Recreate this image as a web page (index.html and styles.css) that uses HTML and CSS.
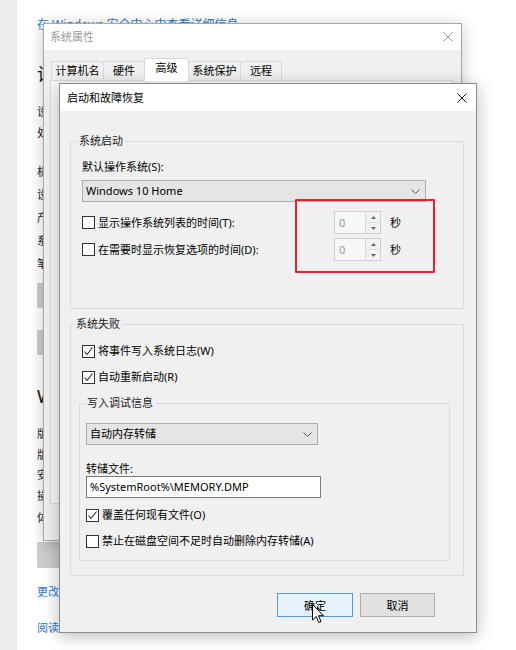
FILE: index.html
```html
<!DOCTYPE html>
<html lang="zh-CN">
<head>
<meta charset="utf-8">
<title>启动和故障恢复</title>
<link rel="stylesheet" href="styles.css">
</head>
<body>
<div class="desktop">
  <aside class="strip"></aside>
  <main class="page">
    <a class="link">在 Windows 安全中心中查看详细信息</a>
    <h1 class="heading first-heading">设备规格</h1>
    <div class="line gap19">设备名称</div>
    <div class="line gap7">处理器</div>
    <div class="line gap25">机带 RAM</div>
    <div class="line gap9">设备 ID</div>
    <div class="line gap9">产品 ID</div>
    <div class="line gap9">系统类型</div>
    <div class="line gap9">笔和触控</div>
    <div class="page-btn gap12">复制</div>
    <div class="page-btn gap22">重命名这台电脑</div>
    <h2 class="heading second-heading">Windows 规格</h2>
    <div class="line gap19">版本</div>
    <div class="line gap7">版本号</div>
    <div class="line gap6">安装日期</div>
    <div class="line gap7">操作系统内部版本</div>
    <div class="line gap8">体验</div>
    <div class="page-btn tall gap17">复制</div>
    <a class="link small gap17">更改产品密钥或升级 Windows</a>
    <a class="link small gap22">阅读适用于我们服务的 Microsoft 服务协议</a>
  </main>

  <section class="win sysprops">
    <header class="titlebar sp-titlebar">
      <span class="title inactive">系统属性</span>
      <span class="close sp-close">
        <svg width="10" height="10" viewBox="0 0 10 10"><path d="M0.5 0.5 L9.5 9.5 M9.5 0.5 L0.5 9.5" stroke="#9a9a9a" stroke-width="1"/></svg>
      </span>
    </header>
    <div class="sp-body">
      <nav class="tabs">
        <span class="tab">计算机名</span>
        <span class="tab">硬件</span>
        <span class="tab active">高级</span>
        <span class="tab">系统保护</span>
        <span class="tab">远程</span>
      </nav>
      <div class="tabpanel"></div>
    </div>
  </section>

  <section class="win startup">
    <header class="titlebar st-titlebar">
      <span class="title">启动和故障恢复</span>
      <span class="close st-close">
        <svg width="10" height="10" viewBox="0 0 10 10"><path d="M0.5 0.5 L9.5 9.5 M9.5 0.5 L0.5 9.5" stroke="#111" stroke-width="1"/></svg>
      </span>
    </header>
    <div class="dlg-body">
      <fieldset class="group boot">
        <legend class="legend boot-legend">系统启动</legend>
        <div class="label">默认操作系统(S):</div>
        <div class="select os-select">
          <span>Windows 10 Home</span>
          <svg class="chev" width="9" height="5" viewBox="0 0 9 5"><path d="M0.5 0.5 L4.5 4.5 L8.5 0.5" fill="none" stroke="#555" stroke-width="1"/></svg>
        </div>
        <div class="timer-row row-first">
          <label class="check timer-check">
            <span class="box"></span>
            <span>显示操作系统列表的时间(T):</span>
          </label>
          <div class="spin">
            <span class="spin-val">0</span>
            <span class="spin-btns">
              <span class="spin-btn"><svg width="5" height="3" viewBox="0 0 5 3"><path d="M0 3 L2.5 0 L5 3 Z" fill="#666"/></svg></span>
              <span class="spin-btn"><svg width="5" height="3" viewBox="0 0 5 3"><path d="M0 0 L2.5 3 L5 0 Z" fill="#666"/></svg></span>
            </span>
          </div>
          <span class="unit">秒</span>
        </div>
        <div class="timer-row row-second">
          <label class="check timer-check">
            <span class="box"></span>
            <span>在需要时显示恢复选项的时间(D):</span>
          </label>
          <div class="spin">
            <span class="spin-val">0</span>
            <span class="spin-btns">
              <span class="spin-btn"><svg width="5" height="3" viewBox="0 0 5 3"><path d="M0 3 L2.5 0 L5 3 Z" fill="#666"/></svg></span>
              <span class="spin-btn"><svg width="5" height="3" viewBox="0 0 5 3"><path d="M0 0 L2.5 3 L5 0 Z" fill="#666"/></svg></span>
            </span>
          </div>
          <span class="unit">秒</span>
        </div>
      </fieldset>

      <fieldset class="group fail">
        <legend class="legend boot-legend">系统失败</legend>
        <label class="check check-row indent">
          <span class="box"><svg width="11" height="11" viewBox="0 0 11 11"><path d="M1.5 5.5 L4 8.5 L9.5 1.5" fill="none" stroke="#222" stroke-width="1.1"/></svg></span>
          <span>将事件写入系统日志(W)</span>
        </label>
        <label class="check check-row indent row-gap">
          <span class="box"><svg width="11" height="11" viewBox="0 0 11 11"><path d="M1.5 5.5 L4 8.5 L9.5 1.5" fill="none" stroke="#222" stroke-width="1.1"/></svg></span>
          <span>自动重新启动(R)</span>
        </label>
        <fieldset class="group debug">
          <legend class="legend debug-legend">写入调试信息</legend>
          <div class="select dump-select">
            <span>自动内存转储</span>
            <svg class="chev" width="9" height="5" viewBox="0 0 9 5"><path d="M0.5 0.5 L4.5 4.5 L8.5 0.5" fill="none" stroke="#555" stroke-width="1"/></svg>
          </div>
          <div class="label dump-label">转储文件:</div>
          <div class="textbox">%SystemRoot%\MEMORY.DMP</div>
          <label class="check check-row overwrite">
            <span class="box"><svg width="11" height="11" viewBox="0 0 11 11"><path d="M1.5 5.5 L4 8.5 L9.5 1.5" fill="none" stroke="#222" stroke-width="1.1"/></svg></span>
            <span>覆盖任何现有文件(O)</span>
          </label>
          <label class="check check-row row-gap">
            <span class="box"></span>
            <span>禁止在磁盘空间不足时自动删除内存转储(A)</span>
          </label>
        </fieldset>
      </fieldset>

      <div class="buttons">
        <button class="btn primary">确定</button>
        <button class="btn cancel">取消</button>
      </div>
    </div>
    <div class="highlight"></div>
  </section>

  <svg class="cursor" width="13" height="20" viewBox="0 0 13 20">
    <path d="M0.5 0.5 L0.5 16 L4.2 12.5 L6.8 18.6 L9 17.6 L6.5 11.7 L11.5 11.7 Z" fill="#fff" stroke="#000" stroke-width="1" stroke-linejoin="round"/>
  </svg>
</div>
</body>
</html>
```

FILE: styles.css
```css
* { box-sizing: border-box; }

html, body {
  margin: 0;
  padding: 0;
}

body {
  width: 516px;
  height: 650px;
  overflow: hidden;
  background: #fff;
  font-family: "Noto Sans", "Noto Sans CJK SC", sans-serif;
  font-size: 11px;
  color: #000;
}

.desktop {
  position: relative;
  width: 516px;
  height: 650px;
  display: flex;
}

.strip {
  flex: none;
  width: 17px;
  background: #ececec;
}

/* background settings page */
.page {
  flex: 1;
  padding: 17px 0 0 20px;
  display: flex;
  flex-direction: column;
  align-items: flex-start;
  line-height: 14px;
  color: #222;
  white-space: nowrap;
}

.link {
  color: #2a78cf;
  font-size: 12px;
  line-height: 16px;
}
.link.small { font-size: 11px; line-height: 14px; }

.heading {
  margin: 0;
  font-weight: normal;
  font-size: 18px;
  line-height: 24px;
  color: #111;
}
.first-heading { margin-top: 29px; }
.second-heading { margin-top: 29px; }

.page-btn {
  width: 110px;
  height: 25px;
  background: #cccccc;
  color: #000;
  padding: 5px 8px 5px 30px;
}
.page-btn.tall { height: 26px; }

.gap6 { margin-top: 6px; }
.gap7 { margin-top: 7px; }
.gap8 { margin-top: 8px; }
.gap9 { margin-top: 9px; }
.gap12 { margin-top: 12px; }
.gap17 { margin-top: 17px; }
.gap19 { margin-top: 19px; }
.gap22 { margin-top: 22px; }
.gap25 { margin-top: 25px; }

/* windows */
.win {
  position: absolute;
  display: flex;
  flex-direction: column;
  background: #f0f0f0;
  border: 1px solid #a8a8a8;
  box-shadow: 0 2px 14px rgba(0, 0, 0, 0.22);
}

.sysprops {
  left: 43px;
  top: 23px;
  width: 419px;
  height: 518px;
}

.startup {
  left: 59px;
  top: 83px;
  width: 418px;
  height: 550px;
  border-color: #8c8c8c;
  box-shadow: 0 3px 16px rgba(0, 0, 0, 0.28);
}

.titlebar {
  flex: none;
  display: flex;
  align-items: center;
  justify-content: space-between;
  background: #fff;
  line-height: 14px;
}
.sp-titlebar { height: 26px; padding-left: 6px; }
.st-titlebar { height: 27px; padding-left: 7px; }

.title { color: #000; }
.title.inactive { color: #9a9a9a; }

.close {
  display: flex;
  align-items: center;
  justify-content: center;
  height: 100%;
}
.sp-close { width: 26px; }
.st-close { width: 28px; }

/* system properties */
.sp-body {
  flex: 1;
  padding-left: 6px;
}

.tabs {
  height: 30px;
  display: flex;
  align-items: flex-end;
  padding-left: 1px;
}

.tab {
  position: relative;
  height: 19px;
  min-width: 42px;
  padding: 0 3.5px;
  display: flex;
  align-items: center;
  justify-content: center;
  border: 1px solid #d9d9d9;
  border-bottom: none;
  margin-left: -1px;
  background: #f0f0f0;
  line-height: 14px;
  color: #000;
}
.tab:first-child { margin-left: 0; }
.tab.active {
  height: 23px;
  min-width: 45px;
  margin-bottom: -1px;
  padding-bottom: 4px;
  background: #fff;
  z-index: 1;
}

.tabpanel {
  width: 403px;
  height: 424px;
  background: #f9f9f9;
  border: 1px solid #d9d9d9;
}

/* startup and recovery */
.dlg-body {
  position: relative;
  flex: 1;
  display: flex;
  flex-direction: column;
  padding: 23px 12px 0 10px;
  line-height: 14px;
}

.group {
  margin: 0;
  min-width: 0;
  border: 1px solid #dcdcdc;
}
.boot { padding: 12px 11px 47px; }
.fail { margin-top: 8px; padding: 10px 13px 14px 8px; }
.debug { margin-top: 9px; padding: 13px 6px 9px; }

.legend {
  padding: 0 2px;
  line-height: 14px;
  color: #222;
}
.boot-legend { margin-left: -5px; }
.debug-legend { margin-left: -1px; }

.label { line-height: 14px; }
.dump-label { margin-top: 17px; }

.select {
  height: 22px;
  display: flex;
  align-items: center;
  justify-content: space-between;
  padding: 0 5px 0 3px;
  background: #e5e5e5;
  border: 1px solid #adadad;
}
.os-select { margin-top: 6px; width: 344px; }
.dump-select { width: 232px; }

.textbox {
  width: 235px;
  height: 22px;
  padding: 3px 3px 0;
  background: #fff;
  border: 1px solid #7a7a7a;
}

.timer-row {
  height: 23px;
  display: flex;
  align-items: center;
}
.row-first { margin-top: 9px; }
.row-second { margin-top: 4px; }

.check {
  display: flex;
  align-items: center;
  gap: 3px;
  white-space: nowrap;
}
.timer-check { width: 252px; }
.check-row { height: 20px; }
.indent { margin-left: 3px; }
.row-gap { margin-top: 6px; }
.overwrite { margin-top: 7px; }

.box {
  flex: none;
  width: 13px;
  height: 13px;
  border: 1px solid #333;
  background: #fff;
  display: flex;
  align-items: center;
  justify-content: center;
}

.spin {
  width: 47px;
  height: 23px;
  display: flex;
  border: 1px solid #cfcfcf;
  background: #f7f7f7;
}
.spin-val {
  flex: 1;
  padding: 4px 0 0 4px;
  color: #9a9a9a;
}
.spin-btns {
  width: 15px;
  display: flex;
  flex-direction: column;
  border-left: 1px solid #d6d6d6;
}
.spin-btn {
  flex: 1;
  display: flex;
  align-items: center;
  justify-content: center;
  background: #f2f2f2;
}
.spin-btn + .spin-btn { border-top: 1px solid #dcdcdc; }

.unit { margin-left: 9px; }

.buttons {
  display: flex;
  justify-content: flex-end;
  gap: 7px;
  margin-top: 17px;
  padding-right: 29px;
}

.btn {
  height: 24px;
  margin: 0;
  padding: 0;
  font-family: inherit;
  font-size: 11px;
  color: #000;
  border: 1px solid #adadad;
  background: #e1e1e1;
}
.btn.primary {
  width: 76px;
  border-color: #4c9de2;
  background: #e5f1fb;
}
.btn.cancel { width: 75px; }

.highlight {
  position: absolute;
  left: 235px;
  top: 115px;
  width: 140px;
  height: 74px;
  border: 2px solid #e6212b;
  border-radius: 1px;
}

.cursor {
  position: absolute;
  left: 312px;
  top: 604px;
}
```
